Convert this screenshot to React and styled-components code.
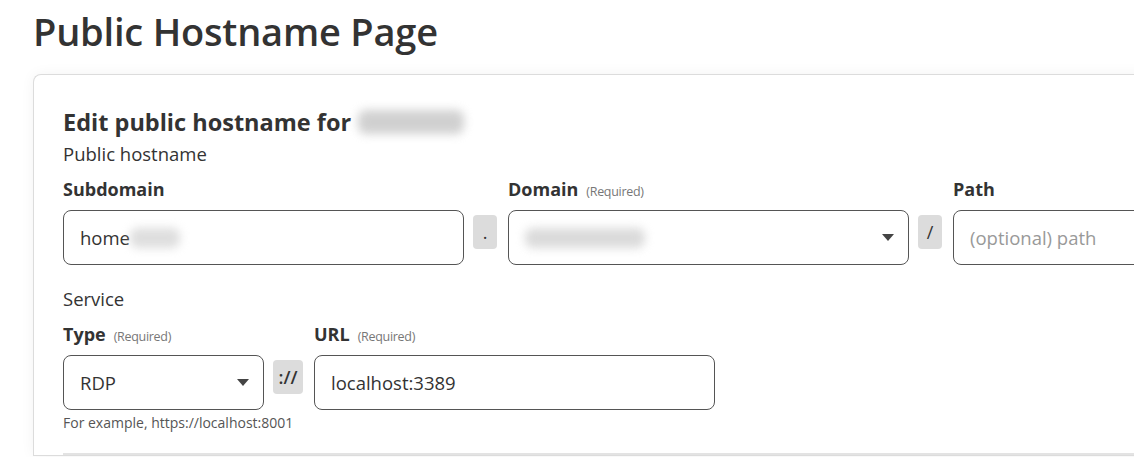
import React from "react";
import styled, { createGlobalStyle } from "styled-components";

const Global = createGlobalStyle`
  html, body { margin: 0; padding: 0; background: #fff; }
  body { font-family: "Open Sans", "Noto Sans", sans-serif; color: #333; overflow: hidden; }
  * { box-sizing: border-box; }
`;

const Page = styled.div`
  padding: 5px 0 0 33px;
  width: 1134px;
  height: 457px;
  overflow: hidden;
`;

const Title = styled.h1`
  margin: 0;
  font-size: 38px;
  font-weight: 600;
  line-height: 52px;
  color: #333;
  letter-spacing: -0.2px;
`;

const Card = styled.section`
  margin-top: 17px;
  width: 1140px;
  border: 1px solid #dcdcdc;
  border-right: none;
  border-radius: 8px 0 0 0;
  padding: 29px 30px 0 29px;
  box-shadow: 0 0 14px rgba(0, 0, 0, 0.05);
  background: #fff;
`;

const Heading = styled.h2`
  margin: 0;
  display: flex;
  align-items: center;
  gap: 7px;
  font-size: 23.5px;
  font-weight: 700;
  line-height: 36px;
  color: #333;
`;

const Blur = styled.span`
  display: inline-block;
  width: ${(p) => p.$w}px;
  height: ${(p) => p.$h}px;
  background: #bdbdbd;
  border-radius: 8px;
  filter: blur(5px);
  opacity: ${(p) => p.$o ?? 1};
`;

const Section = styled.div`
  font-size: 18.5px;
  line-height: 24px;
  margin-top: ${(p) => p.$mt}px;
`;

const Row = styled.div`
  display: flex;
  align-items: flex-start;
  margin-top: ${(p) => p.$mt || 0}px;
`;

const Field = styled.div`
  display: flex;
  flex-direction: column;
  width: ${(p) => p.$w}px;
  flex-shrink: 0;
`;

const Label = styled.label`
  display: flex;
  align-items: baseline;
  gap: 8px;
  font-size: 18px;
  font-weight: 700;
  line-height: 24px;
  height: 24px;
  margin-bottom: 9px;
  color: #333;
`;

const Req = styled.span`
  font-size: 12.5px;
  font-weight: 400;
  color: #777;
  letter-spacing: -0.3px;
`;

const Box = styled.div`
  position: relative;
  height: 55px;
  border: 1px solid #555;
  border-radius: 8px;
  display: flex;
  align-items: center;
  padding: 0 14px 0 16px;
  font-size: 18.5px;
  color: ${(p) => (p.$placeholder ? "#999" : "#333")};
  background: #fff;
`;

const Caret = styled.span`
  margin-left: auto;
  width: 0;
  height: 0;
  border-left: 6px solid transparent;
  border-right: 6px solid transparent;
  border-top: 7px solid #444;
`;

const Chip = styled.div`
  flex-shrink: 0;
  margin: 38px 11px 0 9px;
  width: ${(p) => p.$w}px;
  height: 34px;
  background: #dcdcdc;
  border-radius: 4px;
  display: flex;
  align-items: center;
  justify-content: center;
  font-size: 18px;
  color: #333;
  font-weight: ${(p) => (p.$bold ? 600 : 400)};
`;

const Help = styled.div`
  font-size: 14px;
  line-height: 18px;
  color: #555;
  margin-top: 4px;
  white-space: nowrap;
`;

const Divider = styled.hr`
  margin: 21px 0 0;
  border: none;
  border-top: 2px solid #e3e3e3;
`;

export default function App() {
  return (
    <>
      <Global />
      <Page>
        <Title>Public Hostname Page</Title>
        <Card>
          <Heading>
            Edit public hostname for <Blur $w={106} $h={24} $o={0.7} />
          </Heading>
          <Section $mt={2}>Public hostname</Section>
          <Row $mt={11}>
            <Field $w={401}>
              <Label>Subdomain</Label>
              <Box>
                home
                <Blur $w={50} $h={20} $o={0.5} />
              </Box>
            </Field>
            <Chip $w={24}>.</Chip>
            <Field $w={401}>
              <Label>
                Domain <Req>(Required)</Req>
              </Label>
              <Box>
                <Blur $w={120} $h={20} $o={0.55} />
                <Caret />
              </Box>
            </Field>
            <Chip $w={24}>/</Chip>
            <Field $w={401}>
              <Label>Path</Label>
              <Box $placeholder>(optional) path</Box>
            </Field>
          </Row>
          <Section $mt={22}>Service</Section>
          <Row $mt={11}>
            <Field $w={201}>
              <Label>
                Type <Req>(Required)</Req>
              </Label>
              <Box>
                RDP
                <Caret />
              </Box>
              <Help>For example, https://localhost:8001</Help>
            </Field>
            <Chip $w={30} $bold>
              ://
            </Chip>
            <Field $w={401}>
              <Label>
                URL <Req>(Required)</Req>
              </Label>
              <Box>localhost:3389</Box>
            </Field>
          </Row>
          <Divider />
        </Card>
      </Page>
    </>
  );
}
